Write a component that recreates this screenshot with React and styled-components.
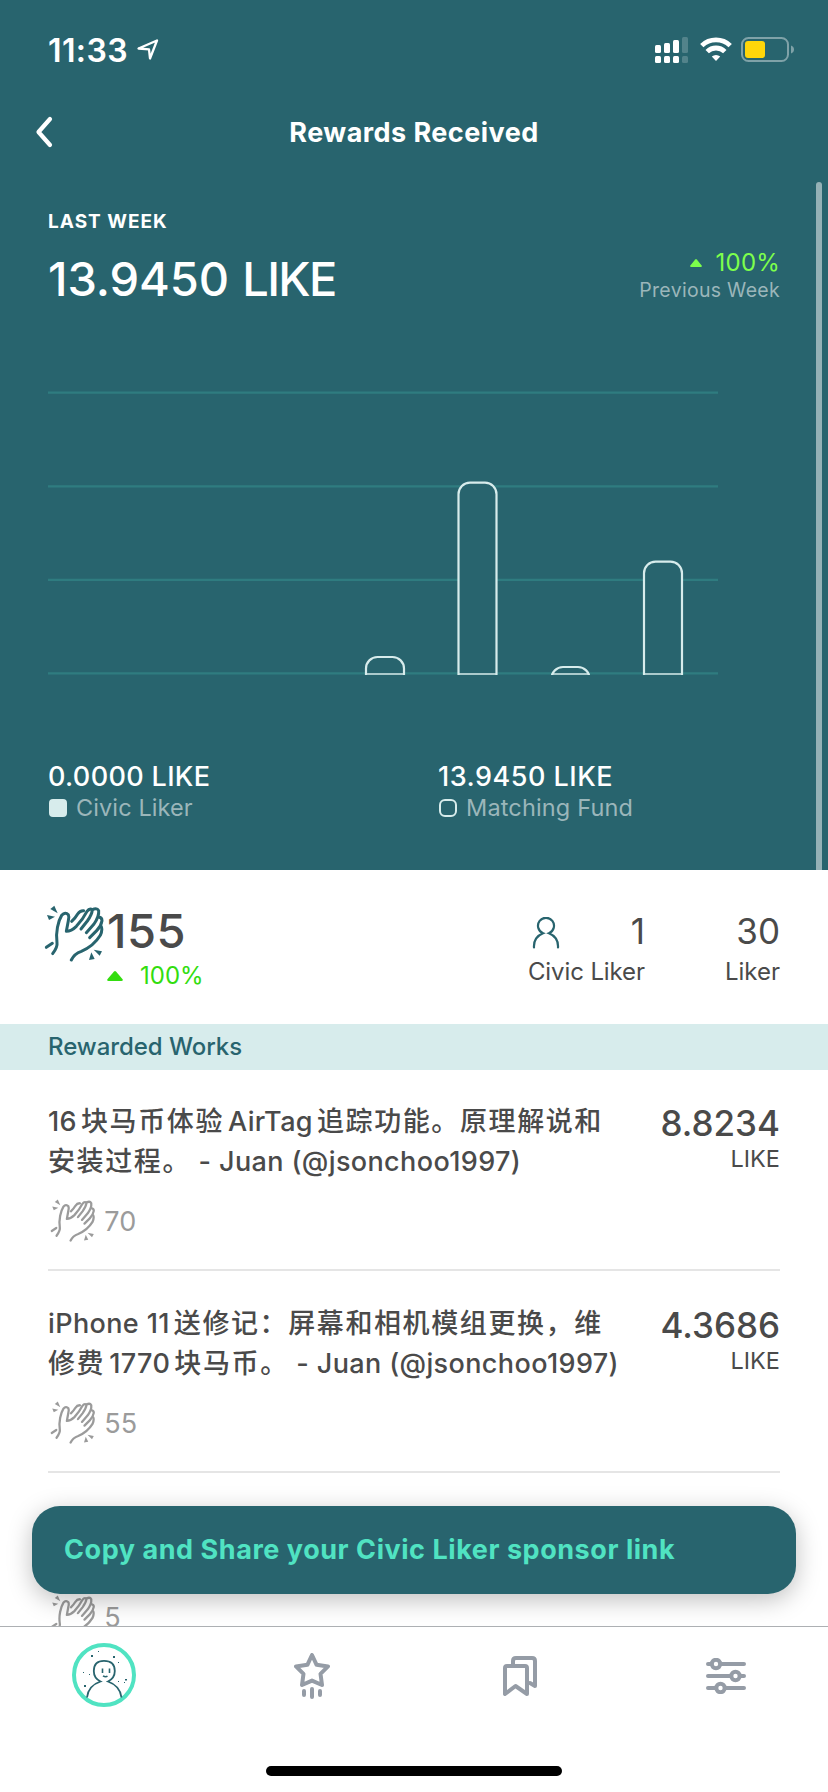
import React from 'react';
import styled, { createGlobalStyle } from 'styled-components';

const TEAL = '#28646e';
const MINT = '#50e3c2';
const PALE = '#d7ecec';
const DARK = '#4a4a4a';
const GREY = '#9b9b9b';

const GlobalStyle = createGlobalStyle`
  * {
    box-sizing: border-box;
  }
  body {
    margin: 0;
    background: #fff;
    font-family: Inter, 'Noto Sans CJK SC', sans-serif;
  }
`;

const Screen = styled.div`
  display: flex;
  flex-direction: column;
  width: 828px;
  height: 1792px;
  overflow: hidden;
  background: #fff;
`;

const Content = styled.main`
  position: relative;
  flex: 1;
  min-height: 0;
  overflow: hidden;
`;

const Text = styled.span`
  display: block;
  padding-top: ${props => props.$top || 0}px;
  white-space: pre;
  color: ${props => props.$color || '#fff'};
  font-size: ${props => props.$size}px;
  line-height: ${props => props.$line}px;
  font-weight: ${props => props.$weight || 400};
  letter-spacing: ${props => props.$spacing || 0}px;
`;

const Unit = styled.span`
  margin-left: 1px;
  letter-spacing: -1.7px;
`;

const Header = styled.header`
  height: 870px;
  background: ${TEAL};
`;

const StatusBar = styled.div`
  display: flex;
  align-items: center;
  justify-content: space-between;
  height: 100px;
  padding: 0 33px 0 48px;
`;

const StatusGroup = styled.div`
  display: flex;
  align-items: ${props => props.$align || 'center'};
  gap: 9px;
`;

const NavBar = styled.div`
  display: grid;
  grid-template-columns: 60px 1fr 60px;
  align-items: center;
  justify-items: center;
  height: 64px;
`;

const BackButton = styled.button`
  display: flex;
  justify-self: start;
  padding: 0 0 0 34px;
  border: none;
  background: none;
`;

const Summary = styled.section`
  padding: 43px 48px 0;
`;

const SummaryRow = styled.div`
  display: flex;
  justify-content: space-between;
  height: 61px;
  margin-top: 12px;
`;

const Column = styled.div`
  display: flex;
  flex-direction: column;
  align-items: ${props => (props.$end ? 'flex-end' : 'flex-start')};
  margin-left: ${props => props.$left || 0}px;
  padding-top: ${props => props.$top || 0}px;
`;

const Change = styled.div`
  display: flex;
  align-items: center;
  gap: ${props => props.$gap}px;
`;

const ChartBox = styled.div`
  height: 310px;
  margin-top: 70px;

  & > svg {
    display: block;
  }
`;

const Legend = styled.div`
  display: grid;
  grid-template-columns: 390px 1fr;
  margin-top: 71px;
`;

const LegendLabel = styled.div`
  display: flex;
  align-items: center;
  gap: 9px;
  padding-left: 1px;
`;

const Swatch = styled.i`
  width: 18px;
  height: 18px;
  border: 2px solid ${PALE};
  border-radius: ${props => (props.$filled ? 4 : 6)}px;
  background: ${props => (props.$filled ? PALE : 'transparent')};
`;

const ScrollThumb = styled.div`
  position: absolute;
  top: 182px;
  right: 6px;
  width: 6px;
  height: 688px;
  border-radius: 3px 3px 0 0;
  background: #94b1b6;
`;

const Stats = styled.section`
  display: flex;
  height: 154px;
  padding: 31px 48px 0 44px;
`;

const ClapBox = styled.div`
  width: 63px;
  padding-top: 4px;
`;

const StatsRight = styled.div`
  display: flex;
  margin-left: auto;
`;

const IconValue = styled.div`
  display: flex;
  align-items: center;
  justify-content: space-between;
  align-self: stretch;
  padding-left: 4px;

  & > svg {
    margin-top: 3px;
  }
`;

const SectionTitle = styled.h2`
  display: flex;
  align-items: center;
  height: 46px;
  margin: 0;
  padding-left: 48px;
  background: ${PALE};
`;

const List = styled.ul`
  margin: 0;
  padding: 0 48px;
  list-style: none;
`;

const Row = styled.li`
  display: flex;
  justify-content: space-between;
  height: 202px;
  padding-top: 33px;
  border-bottom: 2px solid #e5e5e5;

  &:first-child {
    height: 201px;
    padding-top: 32px;
  }
`;

const WorkTitle = styled.div`
  height: ${props => props.$height}px;
`;

const Cjk = styled.span`
  margin-left: ${props => (props.$before ? 4 : 0)}px;
  margin-right: ${props => (props.$after ? 4 : 0)}px;
  letter-spacing: 1.6px;
`;

const Claps = styled.div`
  display: flex;
  align-items: center;
  gap: 9px;
  height: 44px;
  margin-top: 17px;
  padding-left: 2px;
`;

const ShareButton = styled.button`
  position: absolute;
  left: 32px;
  right: 32px;
  bottom: 32px;
  height: 88px;
  padding: 0 0 0 32px;
  border: none;
  border-radius: 28px;
  background: ${TEAL};
  box-shadow: 0 6px 24px rgba(0, 0, 0, 0.25);
  font-family: inherit;
  text-align: left;
`;

const TabBar = styled.nav`
  display: grid;
  grid-template-columns: 208px 208px 208px 204px;
  justify-items: center;
  align-items: center;
  height: 99px;
  border-top: 1px solid #adb0b3;

  & > svg:first-child {
    margin-bottom: 2px;
  }
`;

const HomeArea = styled.div`
  display: flex;
  justify-content: center;
  height: 67px;
  padding-top: 41px;
`;

const HomeIndicator = styled.div`
  width: 296px;
  height: 10px;
  border-radius: 5px;
  background: #000;
`;

const LocationIcon = () => (
  <svg width="22" height="22" viewBox="0 0 22 22" fill="none" stroke="#fff">
    <path d="M1.5 9.5 20 1.5 13 19.5 12 10.3Z" strokeWidth="2.3" strokeLinejoin="round" />
  </svg>
);

const SignalIcon = () => (
  <svg width="36" height="26" viewBox="0 0 36 26" fill="#fff">
    <rect x="0" y="8" width="6" height="8" rx="1.5" />
    <rect x="9" y="6" width="6" height="10" rx="1.5" />
    <rect x="18" y="3" width="6" height="13" rx="1.5" />
    <rect x="27" y="0" width="6" height="16" rx="1.5" opacity="0.2" />
    <rect x="0" y="19" width="6" height="7" rx="1.5" />
    <rect x="9" y="19" width="6" height="7" rx="1.5" />
    <rect x="18" y="19" width="6" height="7" rx="1.5" />
    <rect x="27" y="19" width="6" height="7" rx="1.5" opacity="0.2" />
  </svg>
);

const WifiIcon = () => (
  <svg width="32" height="24" viewBox="0 0 32 24" fill="none" stroke="#fff" strokeWidth="4.8">
    <path d="M1.8 8.6a20.4 20.4 0 0 1 28.4 0" />
    <path d="M7.2 14.6a12.6 12.6 0 0 1 17.6 0" />
    <path d="M16 24l-4.2-4.4a6.1 6.1 0 0 1 8.4 0Z" fill="#fff" stroke="none" />
  </svg>
);

const BatteryIcon = () => (
  <svg width="54" height="25" viewBox="0 0 54 25" fill="none">
    <rect x="1" y="1" width="46" height="23" rx="6.5" stroke="#7fa2a8" strokeWidth="2" />
    <rect x="4" y="4" width="20" height="17" rx="3" fill="#ffd60a" />
    <path d="M50 8.5c4 1.2 4 6.8 0 8Z" fill="#7fa2a8" />
  </svg>
);

const ClapIcon = ({ color, width }) => (
  <svg
    width={width}
    height={(width * 172) / 180}
    viewBox="132 496 180 172"
    fill="none"
    stroke={color}
    strokeWidth="9"
    strokeLinecap="round"
    strokeLinejoin="round"
  >
    <path d="M158 642Q173 622 171 610C166 578 175 543 185 527Q196 515 205 525Q208 531 205 543L199 575Q214 575 229 560Q248 540 261 515Q268 505 277 510Q276 525 262 544L243 568" />
    <path d="M215 545Q226 535 233 523Q240 512 251 513" />
    <path d="M277 510Q291 503 296 513Q298 530 282 553L259 579" />
    <path d="M296 532Q306 533 306 543Q303 560 290 573L269 594" />
    <path d="M304 561Q308 572 301 587C285 613 268 625 244 635Q223 642 214 661" />
    <path d="M139 623L157 611" />
    <g fill={color} stroke="none">
      <path d="M151 508 163 498 173 521Z" />
      <path d="M141 526 165 531 147 541Z" />
      <path d="M274 638 284 658 267 661Z" />
      <path d="M281 630 306 635 299 648Z" />
    </g>
  </svg>
);

const PersonIcon = () => (
  <svg width="28" height="32" viewBox="0 0 28 32" fill="none" stroke={TEAL} strokeWidth="2.2" strokeLinecap="round">
    <path d="M2 30.5C1.5 23 5.5 18.5 11 16.2A8 8 0 1 1 17 16.2C22.5 18.5 26.5 23 26 30.5" />
  </svg>
);

const Triangle = ({ width, height, color }) => (
  <svg width={width} height={height} viewBox="0 0 16 10" preserveAspectRatio="none" fill={color}>
    <path d="M7 .6Q8-.4 9 .6L15.6 8.2Q16.3 10 14.5 10H1.5Q-.3 10 .4 8.2Z" />
  </svg>
);

const AvatarIcon = () => (
  <svg width="64" height="64" viewBox="0 0 64 64" fill="none" stroke={TEAL} strokeWidth="1.8">
    <circle cx="32" cy="32" r="30" stroke={MINT} strokeWidth="4" />
    <path d="M15 54.5C16 45 21 41 28.5 38.5C23.5 36 21.8 32.5 21.8 28C21.8 21 25 17.8 32 17.8S42.8 21 42.8 28C42.8 32.5 41 36 36 38.5C43 41 48.5 46 49.5 54.5" />
    <path d="M30.5 25.5V30M37.5 25.5V30M31 32.8Q33.5 34.5 35.5 33.2" strokeWidth="1.6" />
    <g fill={TEAL} stroke="none">
      <rect x="19" y="12" width="2" height="2" />
      <rect x="26" y="8" width="1" height="1" />
      <rect x="41" y="13" width="2" height="2" />
      <rect x="46" y="19" width="1" height="1" />
      <rect x="11" y="29" width="1" height="1" />
      <rect x="17" y="31" width="1" height="1" />
      <rect x="12" y="42" width="2" height="2" />
      <rect x="46" y="38" width="1" height="1" />
      <rect x="53" y="36" width="2" height="1.5" />
      <rect x="52" y="39" width="1" height="1" />
    </g>
  </svg>
);

const StarIcon = () => (
  <svg width="36" height="46" viewBox="0 0 36 46" fill="none" stroke="#959ca6" strokeWidth="4" strokeLinejoin="round" strokeLinecap="round">
    <path d="M18 2L22.6 11.8L34 13.4L26.5 20.8L28 32L18 27.6L8 32L9.5 20.8L2 13.4L13.4 11.8Z" />
    <path d="M10 38V42M18 36V44M26 38V42" />
  </svg>
);

const BookmarksIcon = () => (
  <svg width="34" height="40" viewBox="0 0 34 40" fill="none" stroke="#959ca6" strokeWidth="4" strokeLinejoin="round" strokeLinecap="round">
    <path d="M2 38V12Q2 10 4 10H22Q24 10 24 12V38L12.5 30Z" />
    <path d="M10 8V5Q10 2 13 2H29Q32 2 32 5V30L27 27" />
  </svg>
);

const SlidersIcon = () => (
  <svg width="40" height="36" viewBox="0 0 40 36" fill="#fff" stroke="#959ca6" strokeWidth="4" strokeLinecap="round">
    <path d="M2 6H38M2 18H38M2 30H38" />
    <circle cx="10" cy="6" r="4.2" />
    <circle cx="29.5" cy="18" r="4.2" />
    <circle cx="14.5" cy="30" r="4.2" />
  </svg>
);

const gridLines = [12.7, 106.3, 199.8, 293.4];

const bars = [
  { x: 318, top: 277 },
  { x: 410.5, top: 102.7 },
  { x: 503.5, top: 287 },
  { x: 596, top: 181.7 },
];

const Chart = () => (
  <svg width="732" height="310" viewBox="0 0 732 310">
    <clipPath id="plot">
      <rect width="732" height="295" />
    </clipPath>
    {gridLines.map(y => (
      <path key={y} d={`M0 ${y}H670`} stroke="#2f7c80" strokeWidth="2.2" />
    ))}
    <g clipPath="url(#plot)" fill={TEAL} stroke={PALE} strokeWidth="2.2">
      {bars.map(bar => (
        <rect key={bar.x} x={bar.x} y={bar.top} width="38" height="320" rx="11.5" />
      ))}
    </g>
    {bars.map(bar => (
      <path key={bar.x} d={`M${bar.x} 294h38`} stroke={PALE} strokeWidth="1.6" />
    ))}
  </svg>
);

const works = [
  {
    lines: ['16块马币体验AirTag追踪功能。原理解说和', '安装过程。 - Juan (@jsonchoo1997)'],
    amount: '8.8234',
    claps: 70,
  },
  {
    lines: ['iPhone 11送修记：屏幕和相机模组更换，维', '修费1770块马币。 - Juan (@jsonchoo1997)'],
    amount: '4.3686',
    claps: 55,
  },
  { lines: [], claps: 5 },
];

// CJK runs are tracked a little wider and set off from the latin ones
const MixedText = ({ children }) => {
  const parts = children.split(/([\u3000-\u9fff\uff00-\uffef]+)/);

  return parts.map((part, i) =>
    i % 2 ? (
      <Cjk key={i} $before={parts[i - 1] !== ''} $after={/^[^\s]/.test(parts[i + 1])}>
        {part}
      </Cjk>
    ) : (
      part
    )
  );
};

const Work = ({ work }) => (
  <Row>
    <div>
      <WorkTitle $height={work.lines.length ? 80 : 72}>
        {work.lines.map(line => (
          <Text key={line} $size={27} $line={40} $weight={500} $color={DARK} $spacing={0.38}>
            <MixedText>{line}</MixedText>
          </Text>
        ))}
      </WorkTitle>
      <Claps>
        <ClapIcon color={GREY} width={45.3} />
        <Text $size={27} $line={40} $top={2} $color={GREY}>
          {work.claps}
        </Text>
      </Claps>
    </div>
    {work.amount && (
      <Column $end $top={1}>
        <Text $size={35} $line={40} $weight={500} $color={DARK}>
          {work.amount}
        </Text>
        <Text $size={23.5} $line={32} $color={DARK}>
          LIKE
        </Text>
      </Column>
    )}
  </Row>
);

export default function App() {
  return (
    <Screen>
      <GlobalStyle />
      <Content>
        <Header>
          <StatusBar>
            <StatusGroup>
              <Text $size={32} $line={38} $top={2} $weight={600} $spacing={0.4}>
                11:33
              </Text>
              <LocationIcon />
            </StatusGroup>
            <StatusGroup $align="flex-start">
              <SignalIcon />
              <WifiIcon />
              <BatteryIcon />
            </StatusGroup>
          </StatusBar>
          <NavBar>
            <BackButton aria-label="Back">
              <svg width="20" height="32" viewBox="0 0 20 32" fill="none" stroke="#fff">
                <path d="M16 3L4.5 16L16 29" strokeWidth="4.2" strokeLinecap="round" strokeLinejoin="round" />
              </svg>
            </BackButton>
            <Text $size={27} $line={36} $top={2} $weight={700} $spacing={0.45}>
              Rewards Received
            </Text>
          </NavBar>
          <Summary>
            <Text $size={19} $line={30} $weight={700} $spacing={1}>
              LAST WEEK
            </Text>
            <SummaryRow>
              <Text $size={47} $line={60} $weight={500} $spacing={-0.1}>
                13.9450 <Unit>LIKE</Unit>
              </Text>
              <Column $end>
                <Change $gap={14}>
                  <Triangle width={12} height={8} color="#7dff4c" />
                  <Text $size={24} $line={28} $color="#7dff4c" $spacing={0.2}>
                    100%
                  </Text>
                </Change>
                <Text $size={19.5} $line={26} $color="#9bb6ba" $spacing={0.3}>
                  Previous Week
                </Text>
              </Column>
            </SummaryRow>
            <ChartBox>
              <Chart />
            </ChartBox>
            <Legend>
              <div>
                <Text $size={27} $line={32} $weight={500} $spacing={0.35}>
                  0.0000 LIKE
                </Text>
                <LegendLabel>
                  <Swatch $filled />
                  <Text $size={23.5} $line={30} $color="#9bb6ba" $spacing={0.1}>
                    Civic Liker
                  </Text>
                </LegendLabel>
              </div>
              <div>
                <Text $size={27} $line={32} $weight={500} $spacing={0.5}>
                  13.9450 LIKE
                </Text>
                <LegendLabel>
                  <Swatch />
                  <Text $size={23.5} $line={30} $color="#9bb6ba" $spacing={0.15}>
                    Matching Fund
                  </Text>
                </LegendLabel>
              </div>
            </Legend>
          </Summary>
        </Header>
        <ScrollThumb />
        <Stats>
          <ClapBox>
            <ClapIcon color={TEAL} width={60} />
          </ClapBox>
          <Column>
            <Text $size={47} $line={60} $weight={500} $color={DARK} $spacing={0.5}>
              155
            </Text>
            <Change $gap={17}>
              <Triangle width={16} height={10} color="#33dd0f" />
              <Text $size={24} $line={30} $color="#33dd0f">
                100%
              </Text>
            </Change>
          </Column>
          <StatsRight>
            <Column $top={2}>
              <IconValue>
                <PersonIcon />
                <Text $size={35} $line={56} $color={DARK}>
                  1
                </Text>
              </IconValue>
              <Text $size={24} $line={25} $color={DARK} $spacing={-0.1}>
                Civic Liker
              </Text>
            </Column>
            <Column $end $left={80} $top={2}>
              <Text $size={35} $line={56} $color={DARK}>
                30
              </Text>
              <Text $size={24} $line={25} $color={DARK}>
                Liker
              </Text>
            </Column>
          </StatsRight>
        </Stats>
        <SectionTitle>
          <Text $size={24} $line={30} $weight={500} $color={TEAL} $spacing={-0.05}>
            Rewarded Works
          </Text>
        </SectionTitle>
        <List>
          {works.map(work => (
            <Work key={work.claps} work={work} />
          ))}
        </List>
        <ShareButton>
          <Text $size={27} $line={36} $weight={700} $color={MINT} $spacing={0.55}>
            Copy and Share your Civic Liker sponsor link
          </Text>
        </ShareButton>
      </Content>
      <TabBar>
        <AvatarIcon />
        <StarIcon />
        <BookmarksIcon />
        <SlidersIcon />
      </TabBar>
      <HomeArea>
        <HomeIndicator />
      </HomeArea>
    </Screen>
  );
}
